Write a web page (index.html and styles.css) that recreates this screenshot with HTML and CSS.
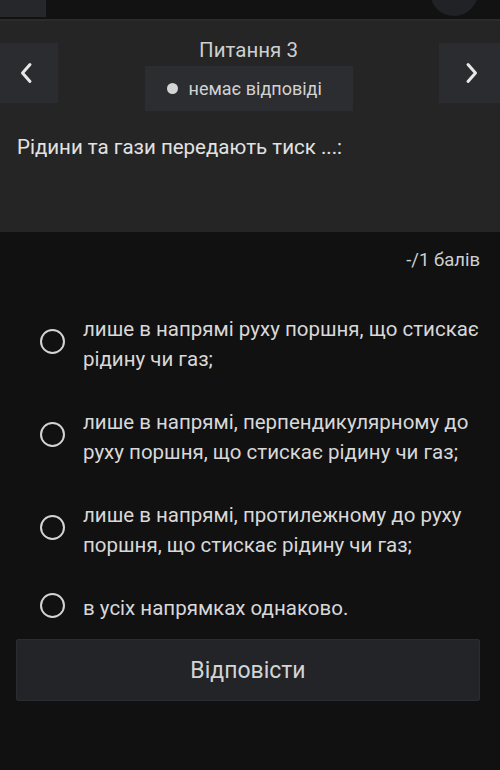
FILE: index.html
```html
<!DOCTYPE html>
<html lang="uk">
<head>
<meta charset="utf-8">
<title>Питання 3</title>
<link rel="stylesheet" href="styles.css">
</head>
<body>
<div class="topbar">
  <div class="top-left"></div>
  <div class="top-circle">
    <svg class="top-glyph" width="14" height="14" viewBox="0 0 14 14"><path d="M4 0 L11 0" stroke="#e6e6e6" stroke-width="3" stroke-linecap="round"/></svg>
  </div>
</div>
<div class="header">
  <div class="nav">
    <button class="nav-btn nav-prev">
      <svg width="14" height="22" viewBox="0 0 14 22"><path d="M11 2.5 L3.5 11 L11 19.5" fill="none" stroke="#e8e8e8" stroke-width="3" stroke-linecap="round" stroke-linejoin="round"/></svg>
    </button>
    <div class="nav-center">
      <div class="title">Питання 3</div>
      <div class="pill"><span class="dot"></span><span>немає відповіді</span></div>
    </div>
    <button class="nav-btn nav-next">
      <svg width="14" height="22" viewBox="0 0 14 22"><path d="M3 2.5 L10.5 11 L3 19.5" fill="none" stroke="#e8e8e8" stroke-width="3" stroke-linecap="round" stroke-linejoin="round"/></svg>
    </button>
  </div>
  <div class="question">Рідини та гази передають тиск ...:</div>
</div>
<div class="main">
  <div class="score">-/1 балів</div>
  <div class="options">
    <label class="option"><span class="radio"></span><span class="opt-text">лише в напрямі руху поршня, що стискає рідину чи газ;</span></label>
    <label class="option"><span class="radio"></span><span class="opt-text">лише в напрямі, перпендикулярному до руху поршня, що стискає рідину чи газ;</span></label>
    <label class="option"><span class="radio"></span><span class="opt-text">лише в напрямі, протилежному до руху поршня, що стискає рідину чи газ;</span></label>
    <label class="option"><span class="radio"></span><span class="opt-text">в усіх напрямках однаково.</span></label>
  </div>
  <button class="submit">Відповісти</button>
</div>
</body>
</html>
```
FILE: styles.css
```css
* { box-sizing: border-box; }
html, body { margin: 0; padding: 0; }
body {
  background: #111111;
  font-family: Roboto, "Noto Sans", sans-serif;
  color: #d6d6d6;
  width: 500px;
  height: 770px;
  overflow: hidden;
}
.topbar {
  height: 21px;
  background: #121212;
  border-bottom: 2px solid #2b2b2b;
  display: flex;
  justify-content: space-between;
  overflow: hidden;
}
.top-left {
  width: 46px;
  height: 17px;
  background: #25272b;
}
.top-circle {
  width: 48px;
  height: 48px;
  border-radius: 50%;
  background: #202226;
  margin-top: -32px;
  margin-right: 22px;
  display: flex;
  justify-content: flex-start;
  align-items: flex-end;
  padding: 0 0 18px 10px;
}
.header {
  background: #252525;
  height: 211px;
  padding-top: 17px;
}
.nav {
  display: flex;
  align-items: flex-start;
  justify-content: space-between;
}
.nav-btn {
  margin-top: 5px;
  height: 60px;
  border: none;
  background: #2b2c30;
  display: flex;
  align-items: center;
  justify-content: center;
  padding: 0;
}
.nav-prev { width: 58px; padding-right: 6px; }
.nav-next { width: 61px; padding-left: 4px; }
.nav-center {
  display: flex;
  flex-direction: column;
  align-items: center;
  gap: 4px;
}
.title {
  font-size: 20.5px;
  line-height: 24px;
  color: #cfcfcf;
}
.pill {
  width: 208px;
  height: 45px;
  background: #2c2d31;
  display: flex;
  align-items: center;
  padding-left: 22px;
  gap: 11px;
  font-size: 18px;
  color: #d2d2d2;
}
.dot {
  width: 11px;
  height: 11px;
  border-radius: 50%;
  background: #d4d4d4;
}
.question {
  margin-top: 22px;
  padding-left: 17px;
  font-size: 20.5px;
  line-height: 28px;
  color: #e2e2e2;
}
.main {
  padding: 0 20px 0 16px;
}
.score {
  margin-top: 16px;
  text-align: right;
  font-size: 18.5px;
  line-height: 24px;
  color: #cfcfcf;
}
.options {
  margin-top: 25px;
}
.option {
  display: flex;
  align-items: center;
  padding: 16.5px 0;
}
.radio {
  flex: none;
  width: 25px;
  height: 25px;
  border-radius: 50%;
  border: 2.5px solid #d4d4d4;
  margin-left: 24px;
  margin-right: 18px;
  margin-bottom: 5px;
}
.opt-text {
  font-size: 20.5px;
  line-height: 30px;
  color: #d8d8d8;
}
.submit {
  width: 464px;
  height: 62px;
  background: #232427;
  border: 1px solid #2b2c2f;
  border-radius: 2px;
  font-family: Roboto, "Noto Sans", sans-serif;
  font-size: 23px;
  color: #d4d4d4;
  padding: 0;
}
```
